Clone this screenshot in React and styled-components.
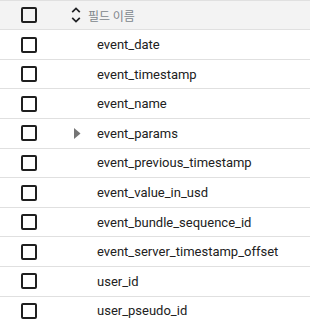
import React from "react"
import styled, { createGlobalStyle } from "styled-components"

/*
    Schema field list: a header with a select-all box and sortable
    "필드 이름" column, then one row per field.
*/
const fields = [
  { name: "event_date" },
  { name: "event_timestamp" },
  { name: "event_name" },
  { name: "event_params", nested: true },
  { name: "event_previous_timestamp" },
  { name: "event_value_in_usd" },
  { name: "event_bundle_sequence_id" },
  { name: "event_server_timestamp_offset" },
  { name: "user_id" },
  { name: "user_pseudo_id" },
]

const GlobalStyle = createGlobalStyle`
  body {
    margin: 0;
    background: #ffffff;
    font-family: Roboto, "Noto Sans CJK KR", sans-serif;
  }
`

const SortIcon = () => (
  <svg width="10" height="16" viewBox="0 0 10 16" fill="none">
    <path d="M1.2 5.2 L5 1.4 L8.8 5.2" stroke="#202124" strokeWidth="1.7" />
    <path d="M1.2 10.8 L5 14.6 L8.8 10.8" stroke="#202124" strokeWidth="1.7" />
  </svg>
)

const ExpandIcon = () => (
  <svg width="7" height="11" viewBox="0 0 7 11">
    <path d="M0 0 L6.5 5.5 L0 11 Z" fill="#757575" />
  </svg>
)

const App = () => {
  return (
    <Table>
      <GlobalStyle />
      <HeaderRow>
        <CheckCell>
          <CheckBox />
        </CheckCell>
        <SortButton>
          <SortIcon />
        </SortButton>
        <HeaderLabel>필드 이름</HeaderLabel>
      </HeaderRow>
      {fields.map(field => (
        <FieldRow key={field.name}>
          <CheckCell>
            <CheckBox />
          </CheckCell>
          <ExpandCell>{field.nested ? <ExpandIcon /> : null}</ExpandCell>
          <FieldName>{field.name}</FieldName>
        </FieldRow>
      ))}
    </Table>
  )
}

const Table = styled.div`
  display: flex;
  flex-direction: column;
  width: 310px;
  border-top: 1px solid #e0e0e0;
`
const HeaderRow = styled.div`
  display: flex;
  align-items: center;
  height: 28.3px;
  background: #f3f3f3;
  border-bottom: 1px solid #e0e0e0;
`
const FieldRow = styled.div`
  display: flex;
  align-items: center;
  height: 28.6px;
  border-bottom: 1px solid #e0e0e0;
`
const CheckCell = styled.div`
  display: flex;
  align-items: center;
  width: 58px;
  padding-left: 21px;
  box-sizing: border-box;
`
const CheckBox = styled.span`
  display: block;
  width: 16px;
  height: 16px;
  box-sizing: border-box;
  border: 2px solid #1f1f1f;
  border-radius: 2px;
`
const SortButton = styled.span`
  display: flex;
  align-items: center;
  margin-left: 13px;
  width: 17px;
`
const HeaderLabel = styled.span`
  font-family: "Noto Sans CJK KR", Roboto, sans-serif;
  font-size: 12px;
  color: #80868b;
`
const ExpandCell = styled.span`
  display: flex;
  align-items: center;
  width: 39px;
  padding-left: 16px;
  box-sizing: border-box;
`
const FieldName = styled.span`
  font-family: Roboto, sans-serif;
  font-size: 13px;
  color: #212121;
`

export default App
